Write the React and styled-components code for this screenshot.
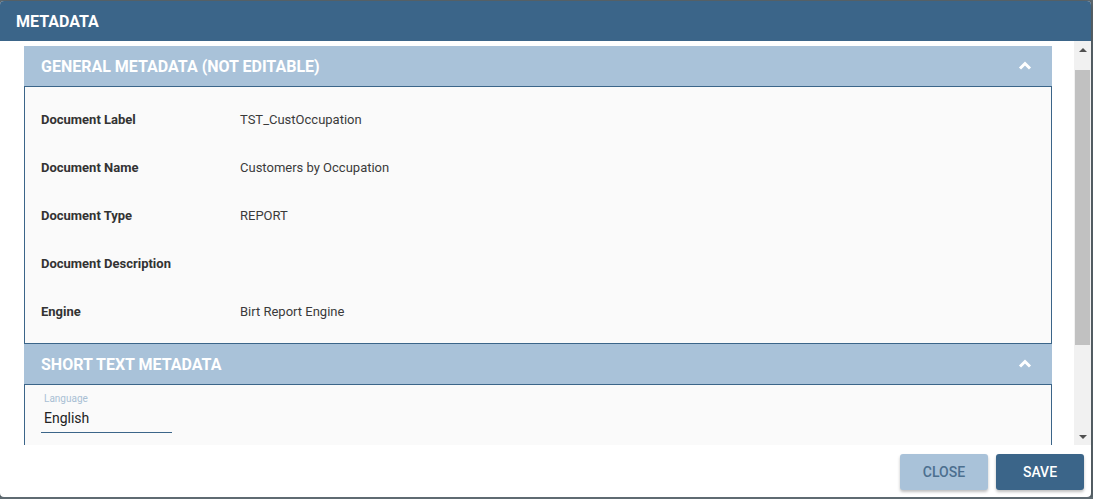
import React from "react";
import styled, { createGlobalStyle } from "styled-components";

const GlobalStyle = createGlobalStyle`
  html, body {
    margin: 0;
    padding: 0;
    background: #5f6b72;
    font-family: Roboto, "Liberation Sans", sans-serif;
  }
`;

const Dialog = styled.div`
  width: 1091px;
  height: 496px;
  margin-top: 1px;
  background: #fff;
  border-radius: 4px;
  overflow: hidden;
  display: flex;
  flex-direction: column;
  box-shadow: 0 2px 8px rgba(0, 0, 0, 0.35);
`;

const TitleBar = styled.div`
  height: 40px;
  flex: none;
  display: flex;
  align-items: center;
  padding-left: 16px;
  background: #3b6589;
  color: #fff;
  font-size: 16px;
  font-weight: 700;
`;

const Body = styled.div`
  flex: 1;
  display: flex;
  min-height: 0;
`;

const Content = styled.div`
  flex: 1;
  overflow: hidden;
  padding: 5px 22px 0 24px;
`;

const PanelHeader = styled.div`
  height: 40px;
  display: flex;
  align-items: center;
  justify-content: space-between;
  padding: 0 20px 0 17px;
  background: #a9c2d9;
  color: #fff;
  font-size: 16px;
  font-weight: 700;
`;

const PanelBody = styled.div`
  background: #fafafa;
  border: 1px solid #3b6589;
  padding: ${(p) => p.$pad || "8px 0"};
`;

const Row = styled.div`
  height: 48px;
  display: flex;
  align-items: center;
  padding-left: 16px;
  font-size: 13px;
`;

const Label = styled.div`
  width: 199px;
  font-weight: 700;
  color: #333;
`;

const Value = styled.div`
  color: #3a3a3a;
`;

const Field = styled.div`
  width: 128px;
  margin-left: 16px;
  border-bottom: 1px solid #3b6589;
  padding: 0 0 6px 3px;
`;

const FieldLabel = styled.div`
  font-size: 10px;
  color: #a9bfd4;
  margin-bottom: 6px;
`;

const FieldValue = styled.div`
  font-size: 14px;
  color: #222;
`;

const Scrollbar = styled.div`
  width: 17px;
  flex: none;
  background: #f1f1f1;
  display: flex;
  flex-direction: column;
  align-items: center;
`;

const Arrow = styled.div`
  height: 17px;
  flex: none;
  display: flex;
  align-items: center;
  justify-content: center;
  &::after {
    content: "";
    border-left: 4px solid transparent;
    border-right: 4px solid transparent;
    ${(p) =>
      p.$down ? "border-top: 4px solid #505050;" : "border-bottom: 4px solid #505050;"}
  }
`;

const Track = styled.div`
  flex: 1;
  width: 100%;
  display: flex;
  flex-direction: column;
  align-items: center;
`;

const Thumb = styled.div`
  width: 15px;
  height: 275px;
  margin-top: 12px;
  background: #c1c1c1;
`;

const Footer = styled.div`
  height: 52px;
  flex: none;
  display: flex;
  align-items: center;
  justify-content: flex-end;
  gap: 8px;
  padding: 2px 7px 0 0;
  box-sizing: border-box;
`;

const Button = styled.button`
  width: 88px;
  height: 36px;
  border: none;
  border-radius: 3px;
  font-family: Roboto, "Liberation Sans", sans-serif;
  font-size: 14px;
  font-weight: 500;
  text-transform: uppercase;
  background: ${(p) => (p.$primary ? "#3b6589" : "#a9c2d9")};
  color: ${(p) => (p.$primary ? "#fff" : "#4c6f8f")};
  box-shadow: 0 2px 3px rgba(0, 0, 0, 0.25);
`;

const Chevron = () => (
  <svg width="14" height="10" viewBox="0 0 14 10">
    <path d="M2 7.5 L7 2.5 L12 7.5" fill="none" stroke="#fff" strokeWidth="3" />
  </svg>
);

const rows = [
  ["Document Label", "TST_CustOccupation"],
  ["Document Name", "Customers by Occupation"],
  ["Document Type", "REPORT"],
  ["Document Description", ""],
  ["Engine", "Birt Report Engine"],
];

export default function App() {
  return (
    <>
      <GlobalStyle />
      <Dialog>
        <TitleBar>METADATA</TitleBar>
        <Body>
          <Content>
            <PanelHeader>
              GENERAL METADATA (NOT EDITABLE)
              <Chevron />
            </PanelHeader>
            <PanelBody>
              {rows.map(([k, v]) => (
                <Row key={k}>
                  <Label>{k}</Label>
                  <Value>{v}</Value>
                </Row>
              ))}
            </PanelBody>
            <PanelHeader>
              SHORT TEXT METADATA
              <Chevron />
            </PanelHeader>
            <PanelBody $pad="8px 0 40px">
              <Field>
                <FieldLabel>Language</FieldLabel>
                <FieldValue>English</FieldValue>
              </Field>
            </PanelBody>
          </Content>
          <Scrollbar>
            <Arrow />
            <Track>
              <Thumb />
            </Track>
            <Arrow $down />
          </Scrollbar>
        </Body>
        <Footer>
          <Button>Close</Button>
          <Button $primary>Save</Button>
        </Footer>
      </Dialog>
    </>
  );
}
